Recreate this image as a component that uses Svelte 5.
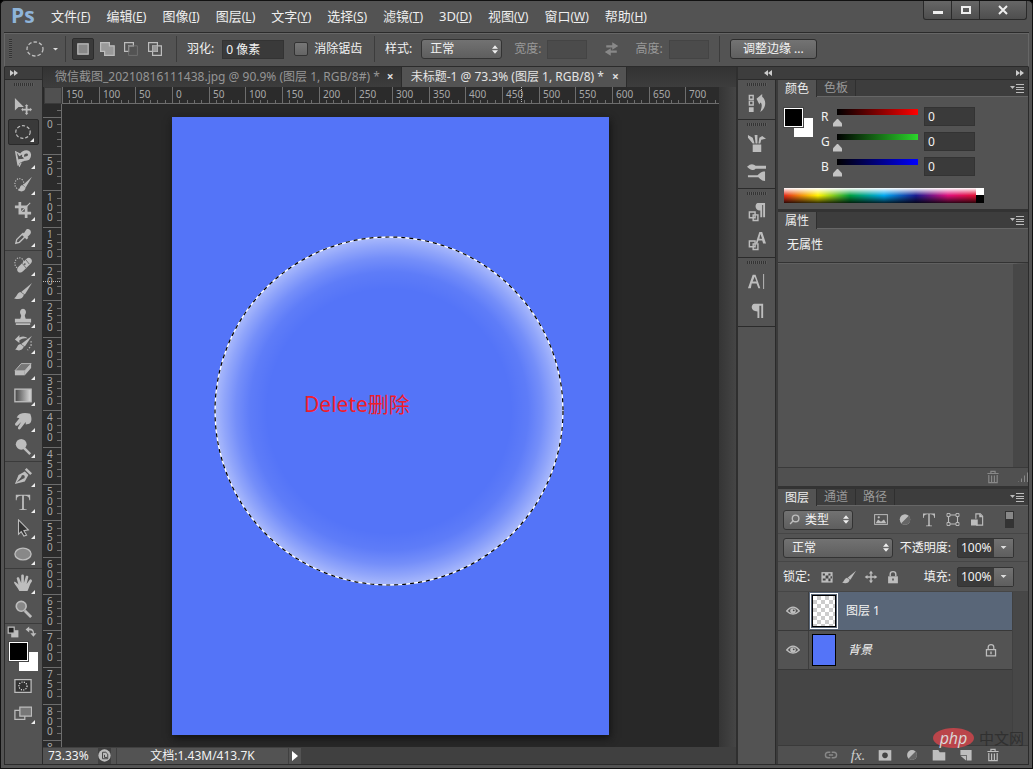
<script>
  const menus = [
    ["文件", "F"], ["编辑", "E"], ["图像", "I"], ["图层", "L"], ["文字", "Y"], ["选择", "S"],
    ["滤镜", "T"], ["3D", "D"], ["视图", "V"], ["窗口", "W"], ["帮助", "H"],
  ];

  const toolGroups = [
    ["move", "marquee", "lasso", "quick", "crop", "dropper"],
    ["heal", "brush", "stamp", "history", "eraser", "gradient", "smudge", "dodge"],
    ["pen", "type", "arrow", "ellipse"],
    ["hand", "zoom"],
  ];
  const noFlyout = ["move", "zoom"];

  const dock = [["hist"], ["brushes", "presets"], ["paraStyle", "charStyle"], ["char", "para"]];

  const channels = [
    { name: "R", color: "red" },
    { name: "G", color: "green" },
    { name: "B", color: "blue" },
  ];

  // ruler: 73.33% zoom, one label every 50 px of the document
  const scale = 0.7333;
  function ticks(from, origin, length) {
    const list = [];
    for (let v = from; origin + v * scale < length; v += 10) {
      list.push({ v, pos: Math.round(origin + v * scale), major: v % 50 === 0 });
    }
    return list;
  }
  let viewWidth = $state(0);
  let viewHeight = $state(0);
  let hTicks = $derived(ticks(-150, 110, viewWidth));
  let vTicks = $derived(ticks(-10, 13, viewHeight));

  let tool = $state("marquee");
  let antialias = $state(false);
  let rgb = $state([0, 0, 0]);
  let layer = $state("图层 1");

  const icons = {
    move: '<path d="M1 1v14l4-4 6 0z"/><path d="M14 8l2 2h-1v3h3v-1l2 2-2 2v-1h-3v3h1l-2 2-2-2h1v-3h-3v1l-2-2 2-2v1h3v-3h-1z"/>',
    marquee: '<ellipse cx="10" cy="10" rx="8" ry="7" fill="none" stroke="currentColor" stroke-width="1.3" stroke-dasharray="3.6 2"/>',
    lasso: '<path d="M1 2l6 3c2-4 11-6 12 1 0 6-4 7-7 7l-5 2-3 4-1-5zM3 4l2 8 6-1-1-2 4-1c2 0 2-3 0-3-2 0-3 1-3 4H9V6L6 8z" fill-rule="evenodd"/><path d="M4 14l2 5 2-4M5 12l12-1" stroke="currentColor" stroke-width="1.300" fill="none"/>',
    quick: '<ellipse cx="6" cy="10" rx="5" ry="6" fill="none" stroke="currentColor" stroke-width="1.300" stroke-dasharray="1.300 1.500"/><path d="M20 2l-7 12-3-3z"/><path d="M9 11l4 3c-1 5-5 5-9 3 3-1 2-5 5-6z"/>',
    crop: '<path d="M5 1h3v11h11v3H5zM1 5h14v14h-3V8H1z"/><path d="M7 13L18 2" stroke="currentColor" stroke-width="1.200"/>',
    dropper: '<path d="M13 4c2-4 8 0 5 4l-3 3 1 1-2 2-6-6 2-2 1 1z"/><path d="M9 8L3 14l-1 4 4-1 6-6" fill="none" stroke="currentColor" stroke-width="1.500"/>',
    heal: '<ellipse cx="6" cy="8" rx="5" ry="6" fill="none" stroke="currentColor" stroke-width="1.300" stroke-dasharray="1.300 1.500"/><path d="M5 12L14 3c3-3 8 1 5 5l-9 9c-4 4-9-1-5-5z"/><path d="M9 8l5 6M13 4l4 5" stroke="#666"/><circle cx="12" cy="9" r="1" fill="#555"/>',
    brush: '<path d="M20 1l-8 13-4-3z"/><path d="M7 11l4 3c-1 5-6 6-11 4 3-1 3-6 7-7z"/>',
    stamp: '<path d="M8 9c0-2-2-3-1-6 1-3 5-3 6 0 1 3-1 4-1 6l1 3h6v4H1v-4h6zM2 17h16v2H2z"/>',
    history: '<path d="M20 2l-8 12-4-3z"/><path d="M7 11l4 3c-2 5-6 5-10 3 3-1 2-5 6-6z"/><path d="M1 6l5-5v3c4-2 7-1 9 1-4-1-6 0-9 2v3z"/><path d="M19 8v5l-4 5" fill="none" stroke="currentColor" stroke-width="1.500" stroke-dasharray="1.500 2"/>',
    eraser: '<path d="M1 12l7-8h11l-7 8z" fill="#777" stroke="currentColor"/><path d="M1 12h11v5H1z"/><path d="M12 12l7-8v5l-7 8z"/>',
    gradient: '<defs><linearGradient id="tg"><stop stop-color="#444"/><stop offset="1" stop-color="#ddd"/></linearGradient></defs><rect x="1" y="3.500" width="18" height="14" fill="url(#tg)" stroke="currentColor" stroke-width="1.500"/>',
    smudge: '<path d="M3 6c2-5 9-6 15-4 2 4 2 10-1 11l-4 1v-3l-6 8c-1 1-4 0-2-3l3-5-4 4c-2 1-4-1-2-3l4-5z"/>',
    dodge: '<circle cx="8" cy="7" r="6"/><path d="M11 11l7 7" stroke="currentColor" stroke-width="2.800"/>',
    pen: '<path d="M1 19l4-10 7-4 4 4-4 7zM3 17l7-4a2 2 0 1 0-2-2z" fill-rule="evenodd"/><path d="M12 3l2-2 6 6-2 2z"/>',
    type: '<path d="M2 2h16v6h-1c0-4-2-5-6-5v13c0 2 0 2 3 2v1H6v-1c3 0 3 0 3-2V3C5 3 3 4 3 8H2z"/>',
    arrow: '<path d="M5 1l11 11-5 1 3 5-3 1-3-5-3 3z" fill="#333" stroke="currentColor" stroke-width="1.200"/>',
    ellipse: '<ellipse cx="10" cy="10" rx="9" ry="6.500" fill="#888" stroke="currentColor" stroke-width="1.500"/>',
    hand: '<path d="M6 19C4 15 0 11 0 9c1-1 3 1 5 3L3 5c0-2 3-2 3 0l2 5V2c0-2 3-2 3 0v8l2-7c0-2 3-1 3 0l-2 8 3-4c1-2 3-1 3 1-3 4-3 7-5 11z"/>',
    zoom: '<circle cx="8" cy="7" r="5.500" fill="#888" stroke="currentColor" stroke-width="1.800"/><path d="M12 12l7 7" stroke="currentColor" stroke-width="3"/>',
    hist: '<path d="M2.500 1.500h4v4h-4zM2.500 7.500h4v4h-4z" fill="none" stroke="currentColor" stroke-width="1.500"/><path d="M2 14h5v5H2zM10 5l6-5v3c5 4 4 12-2 16 2-6 2-9 0-10l-1 2z"/>',
    brushes: '<path d="M6 11h9v8H6zM9 10L8 1h3v9zM6 10L1 4l0-3 5 3 2 6zM12 10l1-6 3-2 4 3-5 1-1 4z"/>',
    presets: '<path d="M0 4c4-4 7-3 9-1h11v3H9C6 9 3 7 0 4zM1 13h10c3-3 5-4 8-4v10c-3 0-5-2-7-4H1z"/>',
    paraStyle: '<path d="M11 0h8v15h-2V2h-1v13h-2V8c-6 0-6-7-3-8z"/><path d="M2.500 9.500h6v6h-6zM6.500 12.500h5v6h-5z" fill="#555" stroke="currentColor" stroke-width="1.500"/>',
    charStyle: '<path d="M9 12l4-12h3l4 12h-3l-1-3h-4l-1 3zm4-5h3l-2-5z"/><path d="M2.500 9.500h6v6h-6zM6.500 12.500h5v6h-5z" fill="#555" stroke="currentColor" stroke-width="1.500"/>',
    char: '<path d="M1 17L6 3h3l5 14h-2l-2-5H5l-1 5zm5-7h4L8 5zM17 2h1v16h-1z"/>',
    para: '<path d="M8 3h9v15h-2V5h-2v13h-2v-7c-8 0-7-8-3-8z"/>',
    image: '<rect x="1.500" y="3.500" width="17" height="13" fill="none" stroke="currentColor" stroke-width="1.300"/><path d="M3 15l3-5 4 3 4-3 3 5z"/><circle cx="7" cy="7" r="1.500"/>',
    adjust: '<circle cx="10" cy="10" r="7"/><path d="M5 15L15 5a7 7 0 0 1-10 10z" fill="#666"/>',
    shape: '<path d="M4 4h12v12H4z" fill="none" stroke="currentColor" stroke-width="1.500"/><path d="M2 2h4v4H2zM14 2h4v4h-4zM2 14h4v4H2zM14 14h4v4h-4z" fill="#555" stroke="currentColor" stroke-width="1.200"/>',
    smart: '<path d="M8.500 9V2.500h6l3 3v12H9" fill="none" stroke="currentColor" stroke-width="1.500"/><path d="M13 2l5 5h-5zM2 10h9v8H2z"/>',
    checker: '<path d="M2 3h16v15H2z"/><path d="M4 5h3v3H4zM12 5h3v3h-3zM8 8h4v4H8zM15 9h2v3h-2zM4 12h4v3H4zM12 12h3v4h-3z" fill="#444"/>',
    cross: '<path d="M10 1l3 4h-2v4h4V7l4 3-4 3v-2h-4v4h2l-3 4-3-4h2v-4H5v2l-4-3 4-3v2h4V5H7z"/>',
    lock: '<path d="M3 9h14v10H3z"/><path d="M6 9V6c0-5 8-5 8 0v3" fill="none" stroke="currentColor" stroke-width="2"/><path d="M9 12h2v3H9z" fill="#444"/>',
    lockOpen: '<path d="M3.500 9.500h13v9h-13zM6 9V6c0-5 8-5 8 0v3" fill="none" stroke="currentColor" stroke-width="1.800"/><path d="M9 12h2v4H9z"/>',
    eye: '<path d="M1 10q9-11 18 0-9 9-18 0z" fill="none" stroke="currentColor" stroke-width="1.800"/><circle cx="10" cy="10" r="4"/><circle cx="11" cy="9" r="1.300" fill="#444"/>',
    link: '<path d="M9 6H6a4 4 0 0 0 0 8h3M11 6h3a4 4 0 0 1 0 8h-3M7 10h6" fill="none" stroke="currentColor" stroke-width="2"/>',
    mask: '<path d="M1 3h18v15H1z"/><circle cx="10" cy="10.500" r="4" fill="#444"/>',
    folder: '<path d="M1 3h8l2 3h8v12H1z"/>',
    page: '<path d="M2 3h16v15h-7v-8H2z"/><path d="M2 11h8v7z"/>',
    trash: '<path d="M2 5h16M7 5V2h6v3M4 7v11h12V7M8 8v9M12 8v9" fill="none" stroke="currentColor" stroke-width="1.700"/>',
    search: '<circle cx="12" cy="8" r="6" fill="none" stroke="currentColor" stroke-width="2.500"/><path d="M8 12l-6 6" stroke="currentColor" stroke-width="2.500"/>',
    swap: '<path d="M3 5h8V1l8 5-8 5V8H3zM17 12v3H9v4l-8-5 8-5v3z"/>',
    single: '<path d="M3.500 3.500h13v13h-13z" fill="#888" stroke="currentColor" stroke-width="1.500"/>',
    add: '<path d="M2 2h11v4h6v12H7v-5H2z" fill="#999" stroke="currentColor" stroke-width="1.500"/>',
    sub: '<path d="M2 2h11v4H7v7H2z" fill="#555" stroke="currentColor" stroke-width="1.500"/><path d="M7 6h11v12H7z" fill="none" stroke="#777"/>',
    cut: '<path d="M2 2h11v11H2zM7 6h11v12H7z" fill="none" stroke="currentColor" stroke-width="1.500"/><path d="M7 6h6v7H7z" fill="#999"/>',
    mini: '<path d="M7 7h12v12H7z"/><path d="M2 2h10v10H2z" fill="#222" stroke="currentColor" stroke-width="2"/>',
    turn: '<path d="M1 6l6-5v3c6 0 8 3 8 8h4l-5 6-5-6h4c0-4-2-5-6-5v4z"/>',
    quickMask: '<path d="M1 3h18v14H1z" fill="#333" stroke="currentColor" stroke-width="1.400"/><circle cx="10" cy="10" r="4.500" fill="none" stroke="#fff" stroke-width="1.200" stroke-dasharray="1.200 1.500"/>',
    screens: '<path d="M1 7h11v10H1z" fill="#555" stroke="currentColor" stroke-width="1.400"/><path d="M6.500 3.500h13v10h-13z" fill="#777" stroke="currentColor" stroke-width="1.400"/>',
    status: '<circle cx="10" cy="10" r="9.500"/><path d="M7 5h5l3 3v7H7z" fill="none" stroke="#444" stroke-width="1.500"/><path d="M10 9v4h4" fill="none" stroke="#444" stroke-width="1.500"/>',
  };
</script>

{#snippet icon(name)}
  <svg class="icon {name}" viewBox="0 0 20 20" fill="currentColor" aria-hidden="true">{@html icons[name]}</svg>
{/snippet}

{#snippet updown()}
  <svg class="updown" viewBox="0 0 7 10" aria-hidden="true"><path d="M0 4l3.500-4L7 4zM0 6h7l-3.500 4z" fill="#eee" /></svg>
{/snippet}

{#snippet panelMenu()}
  <button class="panel-menu" aria-label="panel menu">
    <svg viewBox="0 0 14 9" aria-hidden="true"><path d="M0 2h5L2.500 5z" fill="#bbb" /><path d="M6 .5h8M6 3.500h8M6 5.500h8M6 8.500h8" stroke="#bbb" /></svg>
  </button>
{/snippet}

{#snippet chevrons(dir)}
  <svg class="chevrons" viewBox="0 0 8 6" aria-hidden="true">
    <path d={dir === "left" ? "M4 0v6L0 3zM8 0v6L4 3z" : "M0 0v6l4-3zM4 0v6l4-3z"} fill="#ccc" />
  </svg>
{/snippet}

<div class="window">
  <header class="menubar">
    <span class="logo">Ps</span>
    <nav>
      {#each menus as [label, key]}
        <a href="#{key}">{label}<span>(<u>{key}</u>)</span></a>
      {/each}
    </nav>
    <div class="controls">
      <button aria-label="minimize"><svg viewBox="0 0 12 12"><path d="M1 7h10v3H1z" fill="#eee" /></svg></button>
      <button aria-label="maximize"><svg viewBox="0 0 12 12"><path d="M2 3h8v6H2z" fill="none" stroke="#eee" stroke-width="2" /></svg></button>
      <button class="close" aria-label="close"><svg viewBox="0 0 12 12"><path d="M2 2l8 8M10 2l-8 8" stroke="#eee" stroke-width="2" /></svg></button>
    </div>
  </header>

  <div class="options">
    <i class="vgrip"></i>
    <button class="preset" aria-label="tool preset">{@render icon("marquee")}<i class="down"></i></button>
    <div class="modes">
      <button class="on" aria-label="new selection">{@render icon("single")}</button>
      <button aria-label="add">{@render icon("add")}</button>
      <button aria-label="subtract">{@render icon("sub")}</button>
      <button aria-label="intersect">{@render icon("cut")}</button>
    </div>
    <div class="set feather">
      <label for="feather">羽化:</label>
      <input id="feather" class="field" value="0 像素" />
      <label class="check"><input type="checkbox" bind:checked={antialias} />消除锯齿</label>
    </div>
    <div class="set sizes">
      <label for="style">样式:</label>
      <span class="select style">
        <select id="style"><option>正常</option></select>
        {@render updown()}
      </span>
      <label class="dim first" for="w">宽度:</label>
      <input id="w" class="field small" disabled />
      <button class="swapper" aria-label="swap">{@render icon("swap")}</button>
      <label class="dim" for="h">高度:</label>
      <input id="h" class="field small" disabled />
    </div>
    <div class="set edge">
      <button class="refine">调整边缘 ...</button>
    </div>
  </div>

  <main>
    <aside class="tools">
      <div class="bar">{@render chevrons("right")}</div>
      <i class="grip"></i>
      {#each toolGroups as group}
        <div class="group">
          {#each group as name}
            <button class="tool" class:active={tool === name} aria-label={name} onclick={() => (tool = name)}>
              {@render icon(name)}
              {#if !noFlyout.includes(name)}<i class="corner"></i>{/if}
            </button>
          {/each}
        </div>
      {/each}
      <div class="minis">
        {@render icon("mini")}
        {@render icon("turn")}
      </div>
      <div class="swatches"><i class="back"></i><i class="front"></i></div>
      <button class="tool mask-tool" aria-label="quick mask">{@render icon("quickMask")}</button>
      <button class="tool" aria-label="screen mode">{@render icon("screens")}<i class="corner"></i></button>
    </aside>

    <section class="workspace">
      <div class="doc-tabs">
        <div class="doc-tab">
          <span>微信截图_20210816111438.jpg @ 90.9% (图层 1, RGB/8#) *</span><button aria-label="close">×</button>
        </div>
        <div class="doc-tab current">
          <span>未标题-1 @ 73.3% (图层 1, RGB/8) *</span><button aria-label="close">×</button>
        </div>
      </div>
      <div class="stage">
        <i class="origin"></i>
        <svg class="ruler top">
          {#each hTicks as t}
            <line x1={t.pos + 0.5} x2={t.pos + 0.5} y1={t.major ? 0 : 13} y2="17" />
            {#if t.major}<text x={t.pos + 4} y="11">{Math.abs(t.v)}</text>{/if}
          {/each}
          <line class="pointer" x1="459.5" x2="459.5" y1="0" y2="17" />
        </svg>
        <i class="scroll"></i>
        <svg class="ruler side">
          {#each vTicks as t}
            <line y1={t.pos + 0.5} y2={t.pos + 0.5} x1={t.major ? 0 : 14} x2="18" />
            {#if t.major}
              {#each String(t.v) as digit, i}
                {#if t.pos + i * 10 < viewHeight}
                  <text x="4" y={t.pos + 11 + i * 10}>{digit}</text>
                {/if}
              {/each}
            {/if}
          {/each}
          <line class="pointer" x1="0" x2="18" y1="177.5" y2="177.5" />
        </svg>
        <div class="canvas" bind:clientWidth={viewWidth} bind:clientHeight={viewHeight}>
          <svg class="document" viewBox="0 0 437 618">
            <defs>
              <radialGradient id="glow">
                <stop offset="0.7" stop-color="#fff" stop-opacity="0" />
                <stop offset="0.8" stop-color="#fff" stop-opacity="0.06" />
                <stop offset="0.88" stop-color="#fff" stop-opacity="0.19" />
                <stop offset="0.95" stop-color="#fff" stop-opacity="0.36" />
                <stop offset="1" stop-color="#fff" stop-opacity="0.5" />
              </radialGradient>
            </defs>
            <rect width="437" height="618" fill="#5474f8" />
            <circle cx="217" cy="294" r="174" fill="url(#glow)" />
            <circle cx="217" cy="294" r="174" fill="none" stroke="#fff" stroke-width="1.3" />
            <circle cx="217" cy="294" r="174" fill="none" stroke="#000" stroke-width="1.2" stroke-dasharray="4 4" />
            <text x="132" y="295">Delete删除</text>
          </svg>
        </div>
        <i class="scroll"></i>
      </div>
      <footer class="status">
        <span class="percent">73.33%</span>
        <span class="badge">{@render icon("status")}</span>
        <span class="size">文档:1.43M/413.7K</span>
        <button aria-label="more"><i></i></button>
      </footer>
    </section>

    <div class="right">
      <div class="bar docks">{@render chevrons("left")}{@render chevrons("right")}</div>
      <div class="columns">
        <aside class="dock">
          {#each dock as group}
            <div class="dock-group">
              <i class="grip"></i>
              {#each group as name}
                <button aria-label={name}>{@render icon(name)}</button>
              {/each}
            </div>
          {/each}
        </aside>

        <div class="panels">
          <section class="panel">
            <div class="tabs"><button class="on">颜色</button><button>色板</button>{@render panelMenu()}</div>
            <div class="color">
              <div class="pair"><i class="back"></i><i class="front"></i></div>
              <div class="channels">
                {#each channels as c, i}
                  <div class="channel">
                    <label for={c.name}>{c.name}</label>
                    <input class="slider {c.color}" type="range" min="0" max="255" bind:value={rgb[i]} aria-label={c.name} />
                    <input id={c.name} class="field" bind:value={rgb[i]} />
                  </div>
                {/each}
              </div>
              <div class="spectrum"><i></i></div>
            </div>
          </section>

          <section class="panel">
            <div class="tabs"><button class="on">属性</button>{@render panelMenu()}</div>
            <p class="none">无属性</p>
            <div class="blank"></div>
            <div class="panel-foot">{@render icon("trash")}<i class="resize"></i></div>
          </section>

          <section class="panel layers">
            <div class="tabs">
              <button class="on">图层</button><button>通道</button><button>路径</button>{@render panelMenu()}
            </div>
            <div class="row filter">
              <span class="select kind">
                {@render icon("search")}
                <select aria-label="类型"><option>类型</option></select>
                {@render updown()}
              </span>
              <div class="kinds">
                {#each ["image", "adjust", "type", "shape", "smart"] as name}
                  <button aria-label={name}>{@render icon(name)}</button>
                {/each}
              </div>
              <i class="toggle"></i>
            </div>
            <div class="row">
              <span class="select blend">
                <select aria-label="混合模式"><option>正常</option></select>
                {@render updown()}
              </span>
              <label class="push" for="opacity">不透明度:</label>
              <span class="combo"><input id="opacity" value="100%" /><button aria-label="opacity"><i class="down"></i></button></span>
            </div>
            <div class="row lock-row">
              <span>锁定:</span>
              <div class="locks">
                {#each ["checker", "brush", "cross", "lock"] as name}
                  <button aria-label={name}>{@render icon(name)}</button>
                {/each}
              </div>
              <label class="push" for="fill">填充:</label>
              <span class="combo"><input id="fill" value="100%" /><button aria-label="fill"><i class="down"></i></button></span>
            </div>
            <div class="list">
              <div class="items">
                <div class="layer" class:selected={layer === "图层 1"}>
                  <button class="see" aria-label="visible">{@render icon("eye")}</button>
                  <button class="name" onclick={() => (layer = "图层 1")}><span class="frame"><i class="thumb clear"></i></span>图层 1</button>
                </div>
                <div class="layer" class:selected={layer === "背景"}>
                  <button class="see" aria-label="visible">{@render icon("eye")}</button>
                  <button class="name" onclick={() => (layer = "背景")}><span class="frame plain"><i class="thumb"></i></span><em>背景</em></button>
                  {@render icon("lockOpen")}
                </div>
              </div>
            </div>
            <div class="panel-foot actions">
              <button class="off" aria-label="link">{@render icon("link")}</button>
              <button class="fx">fx.</button>
              <button aria-label="mask">{@render icon("mask")}</button>
              <button aria-label="adjustment">{@render icon("adjust")}</button>
              <button aria-label="group">{@render icon("folder")}</button>
              <button aria-label="new layer">{@render icon("page")}</button>
              <button aria-label="delete">{@render icon("trash")}</button>
            </div>
          </section>
        </div>
      </div>
    </div>
  </main>
  <div class="watermark"><b>php</b><span>中文网</span></div>
</div>

<style>
  :global(body) {
    background: #000;
  }
  .window {
    position: relative;
    box-sizing: border-box;
    display: flex;
    flex-direction: column;
    height: 100vh;
    padding: 0 3px 3px;
    overflow: hidden;
    border: 1px solid #111;
    border-radius: 5px 5px 0 0;
    background: #535353;
    color: #f2f2f2;
    font: 12px/16px "Noto Sans", "Noto Sans CJK SC", sans-serif;
  }
  .window :global(*) {
    box-sizing: border-box;
  }
  button, input, select {
    margin: 0;
    padding: 0;
    border: 0;
    border-radius: 0;
    background: none;
    color: inherit;
    font: inherit;
  }
  button {
    display: flex;
    align-items: center;
    justify-content: center;
  }
  i {
    display: block;
    flex: none;
  }
  svg {
    display: block;
    flex: none;
  }
  .icon {
    width: 16px;
    height: 16px;
    color: #bdbdbd;
  }

  .menubar {
    display: flex;
    flex: none;
    height: 32px;
    border-bottom: 1px solid #2b2b2b;
  }
  .logo {
    width: 47px;
    padding-left: 7px;
    color: #8fb4d9;
    font: bold 21px/28px "Open Sans", sans-serif;
  }
  nav {
    display: flex;
    flex: 1;
    gap: 16px;
    align-items: center;
  }
  nav a {
    color: #eee;
    font-size: 13px;
    white-space: nowrap;
    text-decoration: none;
  }
  nav span {
    font-size: 12px;
  }
  .controls {
    display: flex;
    height: 19px;
    margin-right: 2px;
    border: 1px solid #2a2a2a;
    border-top: 0;
    border-radius: 0 0 3px 3px;
    background: linear-gradient(#666, #4e4e4e);
  }
  .controls button {
    width: 28px;
    border-right: 1px solid #2a2a2a;
  }
  .controls .close {
    width: 46px;
    border: 0;
  }
  .controls svg {
    width: 12px;
    height: 12px;
  }

  .options {
    display: flex;
    flex: none;
    align-items: center;
    height: 34px;
    padding: 0 0 2px 4px;
    border: 1px solid #666;
    border-bottom-color: #2b2b2b;
    white-space: nowrap;
  }
  .vgrip {
    width: 3px;
    height: 20px;
    background: repeating-linear-gradient(#333 0 1px, #5c5c5c 1px 2px);
  }
  .preset {
    gap: 8px;
    width: 54px;
    height: 26px;
    margin-right: 6px;
    padding-left: 6px;
    border-right: 1px solid #3c3c3c;
  }
  .preset .icon {
    width: 20px;
    height: 20px;
  }
  .down {
    width: 6px;
    height: 3px;
    background: #ddd;
    clip-path: polygon(0 0, 100% 0, 50% 100%);
  }
  .modes {
    display: flex;
    gap: 2px;
    padding-right: 10px;
  }
  .modes button {
    width: 22px;
    height: 22px;
    border-radius: 2px;
  }
  .modes .on {
    border: 1px solid #2c2c2c;
    background: #3a3a3a;
  }
  .set {
    display: flex;
    align-items: center;
    height: 26px;
    padding-left: 10px;
    border-left: 1px solid #3c3c3c;
  }
  .field {
    height: 19px;
    padding: 0 3px;
    border: 1px solid #333;
    background: #3a3a3a;
  }
  .feather {
    width: 198px;
  }
  .feather .field {
    width: 62px;
    margin: 0 10px 0 8px;
  }
  .check {
    display: flex;
    gap: 6px;
    align-items: center;
  }
  .check input {
    width: 14px;
    height: 14px;
    border: 1px solid #333;
    border-radius: 2px;
    background: linear-gradient(#777, #656565);
    appearance: none;
  }
  .check input:checked {
    background: #ddd;
  }
  .select {
    position: relative;
    display: flex;
    align-items: center;
    height: 20px;
    border: 1px solid #333;
    border-radius: 3px;
    background: linear-gradient(#727272, #5e5e5e);
  }
  .select select {
    width: 100%;
    height: 18px;
    padding-left: 8px;
    appearance: none;
  }
  .updown {
    position: absolute;
    right: 3px;
    width: 6px;
    height: 9px;
    pointer-events: none;
  }
  .style {
    width: 81px;
    margin: 0 12px 0 9px;
  }
  .dim {
    color: #999;
  }
  .small {
    width: 40px;
    margin-left: 6px;
    border-color: #444;
    background: #4b4b4b;
  }
  .swapper {
    width: 48px;
  }
  .swapper .icon {
    width: 15px;
    color: #888;
  }
  .sizes {
    width: 345px;
  }
  .refine {
    height: 20px;
    padding: 0 12px;
    border: 1px solid #2d2d2d;
    border-radius: 3px;
    background: linear-gradient(#737373, #5f5f5f);
  }

  main {
    display: flex;
    flex: 1;
    min-height: 0;
    border: 1px solid #2b2b2b;
    border-width: 0 1px 1px;
  }
  .bar {
    display: flex;
    flex: none;
    align-items: center;
    height: 13px;
    padding: 0 5px;
    border-bottom: 1px solid #2b2b2b;
    background: #3d3d3d;
  }
  .chevrons {
    width: 8px;
    height: 6px;
  }
  .grip {
    width: 20px;
    height: 3px;
    background: repeating-linear-gradient(90deg, #333 0 1px, #5c5c5c 1px 2px);
  }
  .tools {
    width: 38px;
    border-right: 1px solid #2b2b2b;
  }
  .tools > .grip {
    margin: 3px auto 6px;
  }
  .group {
    padding: 1px 3px;
    border-bottom: 1px solid #3b3b3b;
  }
  .group:last-of-type {
    border: 0;
  }
  .tool {
    position: relative;
    width: 31px;
    height: 26px;
    padding-right: 2px;
    border-radius: 2px;
  }
  .tool .icon {
    width: 18px;
    height: 18px;
  }
  .tool.active {
    border: 1px solid #2a2a2a;
    background: #3a3a3a;
  }
  .corner {
    position: absolute;
    right: 4px;
    bottom: 2px;
    width: 4px;
    height: 4px;
    background: #eee;
    clip-path: polygon(100% 0, 100% 100%, 0 100%);
  }
  .minis {
    display: flex;
    justify-content: space-between;
    padding: 2px 5px 4px 2px;
  }
  .minis .icon {
    width: 12px;
    height: 12px;
  }
  .swatches, .pair {
    position: relative;
    width: 29px;
    height: 29px;
  }
  .swatches {
    margin: 0 0 2px 4px;
  }
  .front, .back {
    position: absolute;
    width: 19px;
    height: 19px;
    border: 1px solid #fff;
  }
  .front {
    top: 0;
    left: 0;
    background: #000;
    outline: 1px solid #444;
  }
  .back {
    right: 0;
    bottom: 0;
    background: #fff;
  }
  .tools > .tool {
    margin: 0 3px 1px;
  }

  .workspace {
    display: flex;
    flex: 1;
    flex-direction: column;
    min-width: 0;
    background: #282828;
  }
  .doc-tabs {
    display: flex;
    flex: none;
    height: 20px;
    background: linear-gradient(#333, #3d3d3d);
  }
  .doc-tab {
    display: flex;
    gap: 7px;
    align-items: center;
    padding: 0 7px 0 12px;
    border-right: 1px solid #2b2b2b;
    color: #959595;
    white-space: nowrap;
  }
  .doc-tab button {
    color: #ddd;
    font-weight: bold;
  }
  .current {
    gap: 8px;
    padding-left: 9px;
    background: #535353;
    color: #e4e4e4;
  }
  .stage {
    display: grid;
    flex: 1;
    grid-template: 17px 1fr / 19px 1fr 17px;
    min-height: 0;
  }
  .origin {
    margin-left: 1px;
    border: 1px solid #3a3a3a;
    background: #505050;
  }
  .scroll {
    background: linear-gradient(90deg, #353535, #454545);
  }
  .ruler {
    width: 100%;
    height: 100%;
    overflow: hidden;
    background: #2b2b2b;
  }
  .ruler line {
    stroke: #6d6d6d;
  }
  .ruler .pointer {
    stroke: #bbb;
    stroke-dasharray: 1 1;
  }
  .ruler text {
    fill: #a8a8a8;
    font-size: 10px;
  }
  .top {
    border-bottom: 1px solid #6d6d6d;
  }
  .side {
    border-right: 1px solid #6d6d6d;
  }
  .canvas {
    min-height: 0;
    padding: 13px 0 0 110px;
    overflow: hidden;
  }
  .document {
    width: 437px;
    height: 618px;
    box-shadow: 1px 3px 8px #111;
  }
  .document text {
    fill: #f01d2c;
    font-size: 21px;
  }
  .status {
    display: flex;
    flex: none;
    align-items: center;
    height: 17px;
    background: #404040;
  }
  .status > * {
    height: 16px;
    background: #535353;
  }
  .percent {
    width: 50px;
    padding-left: 5px;
  }
  .badge {
    display: flex;
    align-items: center;
    justify-content: center;
    width: 24px;
    border-right: 1px solid #404040;
  }
  .badge .icon {
    width: 13px;
  }
  .size {
    width: 171px;
    text-align: center;
  }
  .status button {
    width: 13px;
    border-left: 1px solid #404040;
  }
  .status button i {
    border: solid transparent;
    border-width: 5px 0 5px 6px;
    border-left-color: #fff;
  }

  .right {
    display: flex;
    flex: none;
    flex-direction: column;
    border-left: 2px solid #2f2f2f;
  }
  .docks {
    justify-content: space-between;
    padding: 0 4px 0 26px;
  }
  .columns {
    display: flex;
    flex: 1;
    min-height: 0;
  }
  .dock {
    width: 38px;
    border-right: 1px solid #2b2b2b;
  }
  .dock-group {
    display: flex;
    flex-direction: column;
    gap: 1px;
    align-items: center;
    padding: 3px 0 2px;
    border-bottom: 1px solid #2b2b2b;
  }
  .dock-group .grip {
    margin-bottom: 2px;
  }
  .dock-group button {
    width: 30px;
    height: 28px;
  }
  .dock-group .icon {
    width: 19px;
    height: 19px;
  }
  .panels {
    display: flex;
    flex-direction: column;
    width: 252px;
    border-left: 2px solid #3b3b3b;
  }
  .panel {
    border-bottom: 3px solid #333;
  }
  .tabs {
    display: flex;
    height: 17px;
    border-bottom: 1px solid #666;
    background: #3d3d3d;
  }
  .tabs > button {
    padding: 0 7px;
    border-right: 1px solid #2f2f2f;
    color: #999;
  }
  .tabs .on {
    height: 17px;
    background: #535353;
    color: #eee;
  }
  .tabs .panel-menu {
    margin-left: auto;
    padding: 0 4px;
    border: 0;
  }
  .panel-menu svg {
    width: 14px;
    height: 9px;
  }
  .color {
    display: grid;
    grid-template-columns: 37px 1fr;
    align-content: start;
    height: 112px;
    padding: 7px 39px 0 6px;
  }
  .pair {
    margin-top: 4px;
  }
  .channel {
    display: flex;
    align-items: center;
    height: 25px;
  }
  .channel label {
    width: 12px;
  }
  .slider {
    width: 89px;
    height: 21px;
    margin-right: 2px;
    background: no-repeat 4px 3px / 81px 6px;
    appearance: none;
  }
  .slider::-webkit-slider-thumb {
    width: 9px;
    height: 8px;
    margin-top: 12px;
    background: #c4c4c4;
    appearance: none;
    clip-path: polygon(50% 0, 100% 60%, 100% 100%, 0 100%, 0 60%);
  }
  .red {
    background-image: linear-gradient(90deg, #000, #f00);
  }
  .green {
    background-image: linear-gradient(90deg, #000, #2bd52b);
  }
  .blue {
    background-image: linear-gradient(90deg, #000, #00f);
  }
  .channel .field {
    width: 51px;
  }
  .spectrum {
    grid-column: 1 / 3;
    display: flex;
    justify-content: flex-end;
    width: 200px;
    height: 15px;
    margin-top: 9px;
    background:
      linear-gradient(#fff, #fff0 50%, #0000 50%, #000c),
      linear-gradient(90deg, #e42a1a, #fff200 17%, #00a040 33%, #00a8f0 50%, #1a1a90 66%, #e0107c 82%, #e01020);
  }
  .spectrum i {
    width: 8px;
    background: linear-gradient(#fff 50%, #000 50%);
  }
  .none {
    height: 34px;
    margin: 0;
    padding: 8px 9px;
    border-bottom: 1px solid #333;
  }
  .blank {
    height: 204px;
    border-top: 1px solid #606060;
    border-right: 15px solid #474747;
  }
  .panel-foot {
    display: flex;
    gap: 18px;
    align-items: center;
    justify-content: flex-end;
    height: 19px;
    border-top: 1px solid #3a3a3a;
    background: #505050;
  }
  .panel-foot .icon {
    width: 14px;
    height: 14px;
  }
  .panel-foot > .icon {
    color: #888;
  }
  .resize {
    width: 10px;
    height: 10px;
    background: repeating-linear-gradient(90deg, #888 0 1px, #505050 1px 3px);
    clip-path: polygon(100% 0, 100% 100%, 0 100%);
  }
  .layers {
    display: flex;
    flex: 1;
    flex-direction: column;
    min-height: 0;
    border: 0;
  }
  .row {
    display: flex;
    flex: none;
    align-items: center;
    height: 28px;
    padding: 0 14px 0 5px;
    border-bottom: 1px solid #464646;
    white-space: nowrap;
  }
  .lock-row {
    height: 30px;
  }
  .kind {
    width: 70px;
    padding-left: 5px;
  }
  .kind .icon {
    width: 11px;
    height: 11px;
  }
  .kind select {
    padding-left: 5px;
  }
  .kinds {
    display: flex;
    flex: 1;
    gap: 8px;
    padding-left: 20px;
  }
  .kinds .icon {
    width: 16px;
    height: 15px;
  }
  .toggle {
    width: 9px;
    height: 17px;
    border: 1px solid #333;
    background: linear-gradient(#888 45%, #333 45%);
  }
  .blend {
    width: 110px;
  }
  .push {
    margin-left: auto;
    padding-right: 6px;
  }
  .combo {
    display: flex;
    height: 20px;
    border: 1px solid #333;
    border-radius: 2px;
    background: #3a3a3a;
  }
  .combo input {
    width: 36px;
    padding-left: 3px;
  }
  .combo button {
    width: 19px;
    background: linear-gradient(#727272, #5e5e5e);
  }
  .locks {
    display: flex;
    gap: 8px;
    padding-left: 10px;
  }
  .locks .icon {
    width: 14px;
    height: 14px;
  }
  .list {
    flex: 1;
    min-height: 0;
    padding-right: 15px;
    background: #474747;
  }
  .items {
    height: 100%;
    border-right: 1px solid #404040;
    background: #454545;
  }
  .layer {
    display: flex;
    align-items: center;
    height: 39px;
    padding-right: 14px;
    border-bottom: 1px solid #383838;
    background: #535353;
  }
  .selected .name {
    margin-right: -14px;
    background: #596678;
  }
  .see {
    width: 31px;
    height: 38px;
    border-right: 1px solid #3d3d3d;
  }
  .name {
    flex: 1;
    gap: 8px;
    justify-content: flex-start;
    height: 38px;
    padding-left: 1px;
  }
  .layer .icon {
    width: 14px;
    height: 14px;
  }
  .frame {
    padding: 1px;
    border: 1px solid #fff;
  }
  .plain {
    border-color: transparent;
  }
  .thumb {
    width: 24px;
    height: 32px;
    border: 1px solid #000;
    background: #5474f8;
  }
  .clear {
    background: repeating-conic-gradient(#ccc 0 25%, #fff 0 50%) 0 0 / 8px 8px;
  }
  em {
    padding-left: 2px;
  }
  .actions {
    gap: 13px;
    padding-right: 28px;
  }
  .off .icon {
    color: #888;
  }
  .fx {
    width: 14px;
    color: #ccc;
    font: italic 15px/16px "Liberation Serif", serif;
  }

  .watermark {
    position: absolute;
    right: 8px;
    bottom: 20px;
    display: flex;
    gap: 5px;
    align-items: center;
    color: #2c2c2c;
    font-size: 15px;
    opacity: 0.8;
  }
  .watermark b {
    width: 41px;
    border-radius: 50%;
    background: #d8454c;
    color: #fff;
    font: italic 16px/20px "Open Sans", sans-serif;
    text-align: center;
  }
</style>
